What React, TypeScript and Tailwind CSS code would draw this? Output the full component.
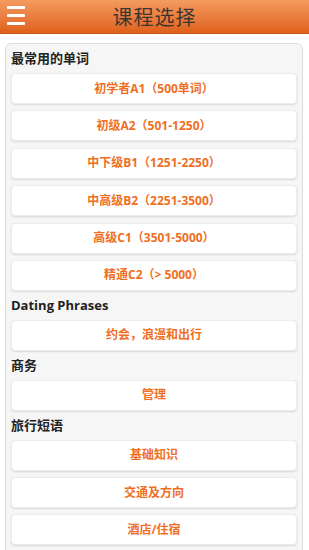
import React from "react";

const sections: { title: string; items: string[] }[] = [
  {
    title: "最常用的单词",
    items: [
      "初学者A1（500单词）",
      "初级A2（501-1250）",
      "中下级B1（1251-2250）",
      "中高级B2（2251-3500）",
      "高级C1（3501-5000）",
      "精通C2（> 5000）",
    ],
  },
  { title: "Dating Phrases", items: ["约会，浪漫和出行"] },
  { title: "商务", items: ["管理"] },
  { title: "旅行短语", items: ["基础知识", "交通及方向", "酒店/住宿"] },
];

const font = { fontFamily: '"Open Sans", "Noto Sans CJK SC", sans-serif' };

export default function App() {
  return (
    <div className="w-[309px] h-[550px] overflow-hidden bg-white" style={font}>
      <header className="relative h-[34px] flex items-center justify-center bg-gradient-to-b from-[#f49b5e] to-[#df6018] border-b border-[#c9571a]">
        <div className="absolute left-[7px] top-[6px] flex flex-col gap-[5px]">
          <span className="block w-[18px] h-[3px] bg-white rounded-[1px]" />
          <span className="block w-[18px] h-[3px] bg-white rounded-[1px]" />
          <span className="block w-[18px] h-[3px] bg-white rounded-[1px]" />
        </div>
        <h1 className="text-[20px] leading-none text-[#3d3530] font-normal tracking-[1px]" style={{ fontFamily: '"Noto Sans CJK SC", sans-serif' }}>
          课程选择
        </h1>
      </header>
      <div className="mt-[9px] ml-[5px] w-[298px] bg-[#f6f6f6] border border-[#dddddd] rounded-[6px] px-[5px] pt-[3px] pb-[20px]">
        {sections.map((s, si) => (
          <div key={s.title}>
            <div className={si === 0 ? "h-[26px] pt-[3px]" : "h-[22.5px]"}>
              <h2 className="text-[13px] leading-[16px] font-bold text-[#222]">{s.title}</h2>
            </div>
            <div className="flex flex-col gap-[6.4px] mb-[6.4px]">
              {s.items.map((it) => (
                <div
                  key={it}
                  className="h-[31px] flex items-center justify-center bg-white rounded-[4px] border border-[#ececec] shadow-[0_1px_2px_rgba(0,0,0,0.12)] text-[12px] font-bold text-[#ef6f1f]"
                >
                  {it}
                </div>
              ))}
            </div>
          </div>
        ))}
      </div>
    </div>
  );
}
